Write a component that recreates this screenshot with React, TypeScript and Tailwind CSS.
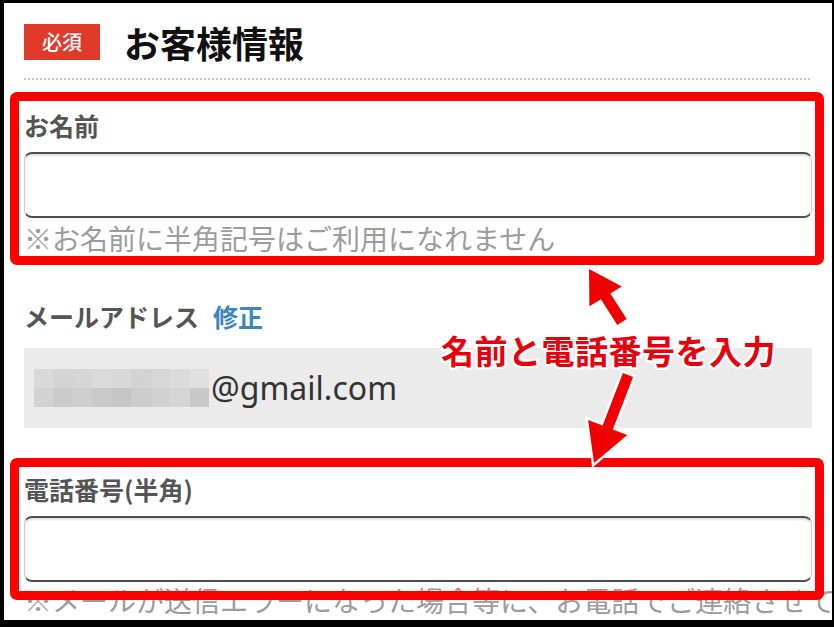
import React from "react";

const jp = "font-['Hiragino_Sans','Noto_Sans_CJK_JP',sans-serif]";

// mosaic that hides the mail address
const mosaic = [
  ["#d9d9d9", "#d4d4d4", "#d6d6d6", "#dadada", "#d8d8d8", "#d3d3d3", "#d7d7d7", "#dbdbdb", "#e0e0e0"],
  ["#d2d2d2", "#cbcbcb", "#cfcfcf", "#c9c9c9", "#c6c6c6", "#cdcdcd", "#d0d0d0", "#d5d5d5", "#c8c8c8"],
];

function Field({ label }: { label: string }) {
  return (
    <>
      <div className="text-[25px] leading-[32px] font-bold text-[#555]">{label}</div>
      <div className="h-[66px] mt-[11px] rounded-[8px] border-y-2 border-y-[#4d4d4d] border-x border-x-[#cfcfcf] bg-white shadow-[inset_0_2px_2px_rgba(0,0,0,0.12)]" />
    </>
  );
}

export default function App() {
  return (
    <div className={`relative w-[834px] h-[627px] bg-black overflow-hidden ${jp}`}>
      <div className="ml-[4px] mt-[3px] w-[828px] h-[617px] bg-white overflow-hidden">
        <div className="pl-[20px] pr-[20px] pt-[21px]">
          <div className="flex items-center gap-[24px]">
            <span className="w-[76px] h-[36px] flex items-center justify-center bg-[#e03a2a] text-white text-[20px] font-medium">
              必須
            </span>
            <h1 className="text-[36px] leading-[36px] font-bold text-[#111]">お客様情報</h1>
          </div>
          <div className="mt-[18px] h-[2px] bg-[repeating-linear-gradient(90deg,#c9c9c9_0_2px,transparent_2px_4px)]" />

          <div className="mt-[29px]">
            <Field label="お名前" />
            <p className="mt-[4px] text-[28px] leading-[32px] text-[#9c9c9c] whitespace-nowrap">
              ※お名前に半角記号はご利用になれません
            </p>
          </div>

          <div className="mt-[46px] text-[25px] leading-[32px] font-bold text-[#555]">
            メールアドレス<span className="ml-[14px] text-[#3a86bd]">修正</span>
          </div>
          <div className="mt-[16px] h-[80px] bg-[#ebebeb] flex items-center pl-[10px]">
            <div className="grid grid-cols-9 w-[175px] h-[38px]">
              {mosaic.flat().map((c, i) => (
                <span key={i} style={{ backgroundColor: c }} />
              ))}
            </div>
            <span className="ml-[2px] font-['Noto_Sans',sans-serif] text-[32px] text-[#333]">@gmail.com</span>
          </div>

          <div className="mt-[45px]">
            <Field label="電話番号(半角)" />
          </div>
          <p className="mt-[2px] text-[28px] leading-[32px] text-[#9c9c9c] whitespace-nowrap">
            ※メールが送信エラーになった場合等に、お電話でご連絡させていただきます
          </p>
        </div>
      </div>

      {/* annotation overlay */}
      <div className="absolute left-[10px] top-[92px] w-[814px] h-[173px] border-[9px] border-[#ff0000] rounded-[7px]" />
      <div className="absolute left-[10px] top-[458px] w-[814px] h-[142px] border-[9px] border-[#ff0000] rounded-[7px]" />

      <svg className="absolute left-0 top-0 w-[834px] h-[627px] pointer-events-none" viewBox="0 0 834 627">
        <polygon
          points="589,269 621.8,286.5 610.3,293.5 626.7,319.1 617.3,324.9 600.9,299.3 589.4,306.3"
          fill="#f00000"
          stroke="#fff"
          strokeWidth="5"
          strokeLinejoin="miter"
          paintOrder="stroke"
        />
        <polygon
          points="594,463 588.1,419.9 602.6,425.5 622.9,373 633.1,377 612.8,429.5 627.3,435"
          fill="#f00000"
          stroke="#fff"
          strokeWidth="5"
          strokeLinejoin="miter"
          paintOrder="stroke"
        />
      </svg>

      <div className="absolute left-[441px] top-[330px] text-[33px] leading-[40px] font-bold text-[#e8000c] tracking-[0.5px] [text-shadow:2px_0_0_#fff,-2px_0_0_#fff,0_2px_0_#fff,0_-2px_0_#fff,2px_2px_0_#fff,-2px_-2px_0_#fff,2px_-2px_0_#fff,-2px_2px_0_#fff]">
        名前と電話番号を入力
      </div>
    </div>
  );
}
